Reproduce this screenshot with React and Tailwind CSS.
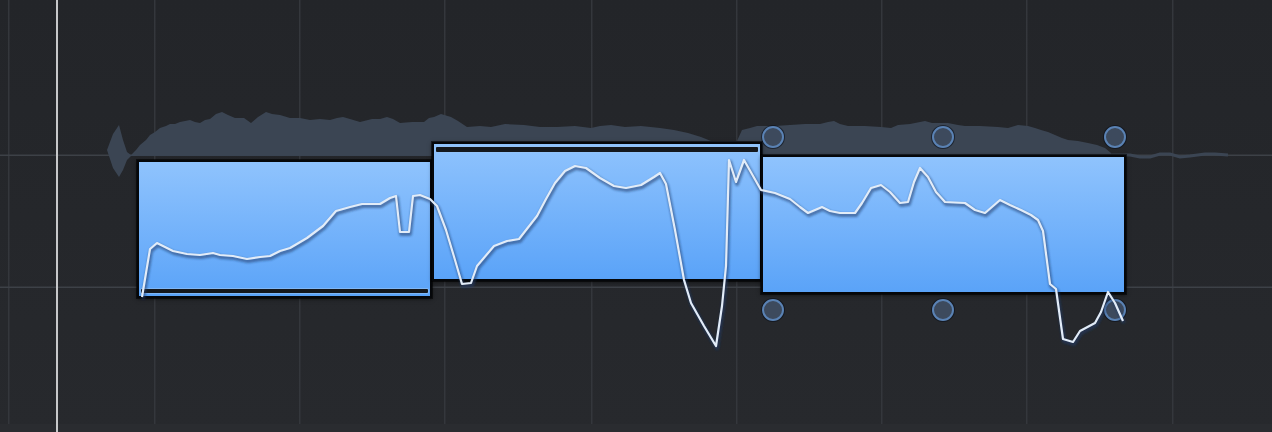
import React from 'react';

// blob (waveform energy) top contour, baseline at y=155
const blobTop = [
  [107, 150], [113, 134], [119, 125], [123, 140], [127, 152], [131, 155], [136, 150], [140, 145],
  [146, 140], [150, 135], [155, 132], [160, 128], [166, 126], [170, 124], [175, 124], [180, 122],
  [190, 120], [195, 122], [200, 123], [205, 120], [210, 119], [216, 114], [222, 112], [228, 115],
  [235, 118], [244, 118], [251, 123], [258, 117], [266, 112], [272, 114], [280, 115], [290, 118],
  [300, 118], [310, 120], [320, 119], [330, 120], [337, 118], [343, 117], [350, 119], [360, 122],
  [372, 119], [380, 119], [387, 117], [393, 119], [400, 123], [412, 122], [424, 122], [429, 118],
  [434, 117], [441, 114], [451, 117], [458, 121], [467, 127], [480, 126], [491, 127], [505, 124],
  [524, 125], [540, 127], [557, 127], [575, 126], [591, 128], [600, 126], [611, 125], [625, 127],
  [641, 126], [660, 128], [674, 130], [688, 133], [701, 137], [711, 141], [737, 141], [742, 130],
  [750, 128], [757, 126], [775, 126], [790, 125], [805, 124], [820, 124], [828, 122], [834, 121],
  [840, 124], [848, 126], [865, 126], [881, 127], [891, 128], [898, 125], [910, 124], [920, 122],
  [925, 121], [932, 123], [948, 123], [958, 125], [965, 126], [980, 126], [998, 127], [1008, 128],
  [1018, 125], [1028, 126], [1035, 128], [1041, 130], [1048, 132], [1055, 135], [1062, 138],
  [1068, 140], [1078, 141], [1088, 143], [1097, 145], [1105, 148], [1111, 153],
];

// blob bottom, including the first spike that dips below the baseline
const blobBottom = [
  [1111, 156], [131, 156], [127, 160], [123, 170], [119, 177], [113, 168],
];

const tail = [
  [1111, 155], [1130, 155], [1140, 157], [1150, 157], [1160, 154], [1170, 154], [1180, 157],
  [1190, 156], [1205, 154], [1215, 154], [1228, 155],
];

const pitch = [
  [142, 297], [150, 249], [157, 243], [173, 251], [187, 254], [200, 255], [213, 253], [220, 255],
  [233, 256], [247, 259], [260, 257], [270, 256], [280, 251], [290, 248], [307, 238], [323, 226],
  [336, 211], [350, 207], [362, 204], [380, 204], [390, 198], [396, 196], [400, 232], [409, 232],
  [413, 196], [420, 195], [430, 199], [437, 206], [446, 230], [455, 260], [462, 284], [471, 283],
  [477, 266], [494, 246], [507, 241], [519, 239], [537, 216], [546, 199], [555, 183], [565, 171],
  [575, 166], [586, 168], [600, 178], [614, 186], [626, 188], [641, 185], [654, 177], [660, 173],
  [666, 184], [675, 230], [684, 280], [691, 303], [704, 326], [716, 346], [722, 306], [726, 266],
  [729, 160], [736, 182], [744, 160], [761, 190], [775, 193], [790, 199], [800, 207], [808, 213],
  [815, 210], [822, 207], [830, 211], [840, 213], [855, 213], [862, 203], [871, 188], [881, 185],
  [890, 192], [900, 203], [908, 202], [914, 182], [920, 168], [928, 177], [936, 192], [945, 202],
  [965, 203], [975, 210], [985, 213], [1000, 200], [1010, 205], [1021, 210], [1031, 215],
  [1038, 220], [1043, 231], [1050, 284], [1056, 289], [1063, 339], [1073, 342], [1080, 331],
  [1095, 323], [1101, 312], [1108, 292], [1115, 303], [1123, 321],
];

const pts = (arr) => arr.map(([x, y]) => `${x},${y}`).join(' ');

const gridX = [8, 154, 299, 444, 591, 736, 881, 1026, 1172];

const notes = [
  { left: 137, top: 160, width: 295, height: 138, bar: 'bottom' },
  { left: 432, top: 142, width: 330, height: 139, bar: 'top' },
  { left: 761, top: 155, width: 365, height: 139, bar: null },
];

const handles = [
  [773, 137], [943, 137], [1115, 137],
  [773, 310], [943, 310], [1115, 310],
];

const Note = ({ left, top, width, height, bar }) => (
  <div
    className="absolute border-2 border-[#05070a] bg-gradient-to-b from-[#8fc3fd] to-[#5aa3f8] shadow-[0_0_0_1px_rgba(0,0,0,0.55),0_1px_4px_rgba(0,0,0,0.6)]"
    style={{ left, top, width, height }}
  >
    {bar === 'top' && (
      <div className="absolute left-[2px] right-[2px] top-[3px] h-[5px] rounded-[1px] bg-[#14181d] shadow-[0_0_0_1px_rgba(150,195,245,0.6)]" />
    )}
    {bar === 'bottom' && (
      <div className="absolute left-[2px] right-[2px] bottom-[3px] h-[4px] rounded-[1px] bg-[#14181d] shadow-[0_0_0_1px_rgba(150,195,245,0.6)]" />
    )}
  </div>
);

const Handle = ({ x, y }) => (
  <div
    className="absolute w-[22px] h-[22px] -ml-[11px] -mt-[11px] rounded-full border-2 border-[#5a82b4] bg-[#3d4a5d] shadow-[0_0_0_1px_rgba(10,15,25,0.6)]"
    style={{ left: x, top: y }}
  />
);

export default function App() {
  return (
    <div className="relative w-[1272px] h-[432px] overflow-hidden bg-gradient-to-b from-[#232529] to-[#27292d]">
      {/* grid + waveform energy */}
      <svg className="absolute inset-0" width="1272" height="432">
        {gridX.map((x) => (
          <rect key={x} x={x} y="0" width="1.5" height="432" fill="#34373c" />
        ))}
        <rect x="0" y="154.5" width="1272" height="1.5" fill="#3d4147" />
        <rect x="0" y="286.5" width="1272" height="1.5" fill="#3d4147" />
        <rect x="0" y="424" width="1272" height="8" fill="#2a2c30" />
        <polygon points={pts([...blobTop, ...blobBottom])} fill="#3b4553" />
        <polyline points={pts(tail)} fill="none" stroke="#3b4553" strokeWidth="3" />
        <rect x="56" y="0" width="2" height="432" fill="#c7c8ca" />
      </svg>

      {notes.map((n, i) => (
        <Note key={i} {...n} />
      ))}

      {handles.map(([x, y], i) => (
        <Handle key={i} x={x} y={y} />
      ))}

      {/* pitch curve */}
      <svg className="absolute inset-0 pointer-events-none" width="1272" height="432">
        <defs>
          <filter id="soft" x="-5%" y="-5%" width="110%" height="110%">
            <feGaussianBlur stdDeviation="1.2" />
          </filter>
        </defs>
        <polyline
          points={pts(pitch)}
          transform="translate(1 2)"
          fill="none"
          stroke="rgba(30,60,105,0.55)"
          strokeWidth="4"
          strokeLinejoin="round"
          filter="url(#soft)"
        />
        <polyline
          points={pts(pitch)}
          fill="none"
          stroke="#e2ecf8"
          strokeWidth="2.2"
          strokeLinejoin="round"
        />
      </svg>
    </div>
  );
}
